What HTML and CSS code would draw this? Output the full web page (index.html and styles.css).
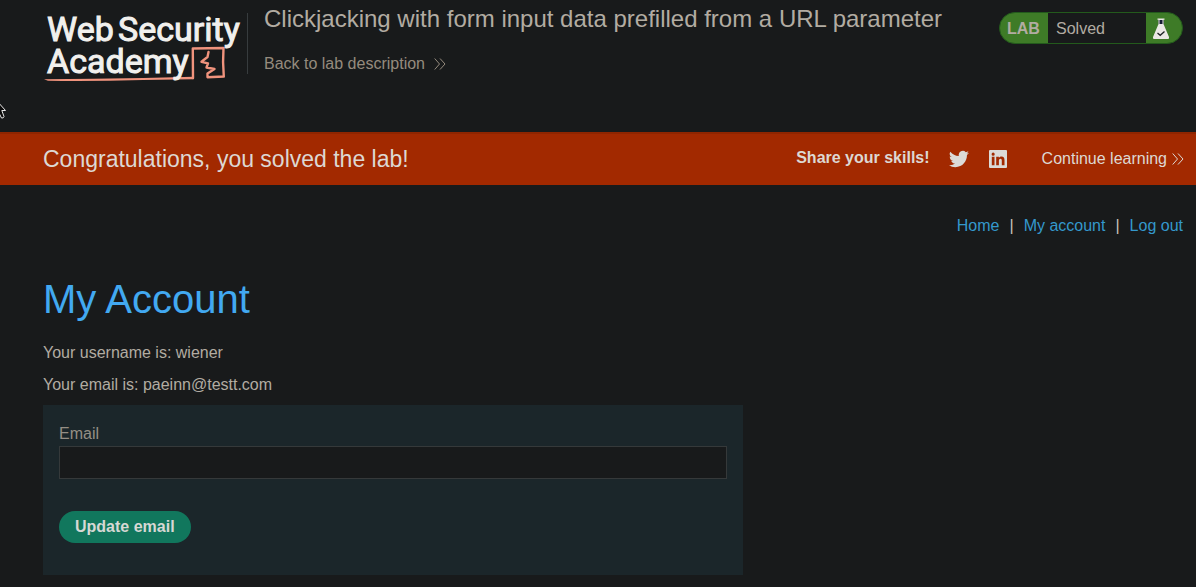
FILE: index.html
```html
<!DOCTYPE html>
<html lang="en">
<head>
<meta charset="utf-8">
<meta name="viewport" content="width=device-width, initial-scale=1">
<title>Clickjacking with form input data prefilled from a URL parameter</title>
<link rel="stylesheet" href="styles.css">
</head>
<body>
<header class="lab-header">
  <a class="logo" href="#" aria-label="Web Security Academy">
    <svg class="logo-art" width="200" height="76" viewBox="0 0 200 76">
      <path fill="none" stroke="#f0937d" stroke-width="2.400" stroke-linejoin="round" stroke-linecap="round" d="M150 68L149.800 38.500L180.500 38Q179.500 52 180.800 66.500L164.500 67.300L164.500 63.500L171.500 59L163.500 57.500L165 53.300L158.500 51.800L164.500 47L165.500 42"/>
      <path fill="#f0937d" d="M1 69.300Q50 69 100 68L150.500 66.800V69.200L100 70Q50 71.500 5 70.800Z"/>
      <g class="logo-text">
        <text x="4" y="31">Web</text>
        <text x="75" y="31">Security</text>
        <text x="4" y="63">Academy</text>
      </g>
    </svg>
  </a>
  <div class="title-block">
    <h2 class="lab-title">Clickjacking with form input data prefilled from a URL parameter</h2>
    <a class="back-link" href="#">Back to lab description
      <svg width="12" height="12" viewBox="0 0 12 12" fill="none" stroke="currentColor"><path d="M.7.500 5.500 6 .7 11.500M6 .500 11 6 6 11.500"/></svg>
    </a>
  </div>
  <div class="lab-status">
    <span class="status-tag">LAB</span>
    <span class="status-text">Solved</span>
    <span class="status-icon">
      <svg width="18" height="22" viewBox="0 0 18 22">
        <path fill="#151b32" d="M6.500 1.500h5V7h-5z"/>
        <path fill="#ebe9e5" d="M5.500.5h7v1.200h-1V6h-1V2H7.500v4h-1V1.700h-1zM6.500 6h5l5.500 13q.5 2-1 2H2q-1.500 0-1-2z"/>
        <path fill="none" stroke="#202426" stroke-width="1.300" d="m5.500 15 2.700 2.300 4.300-3.800"/>
      </svg>
    </span>
  </div>
</header>
<section class="banner">
  <h4 class="banner-message">Congratulations, you solved the lab!</h4>
  <div class="share">
    <span class="share-label">Share your skills!</span>
    <a class="share-link" href="#" aria-label="Share on Twitter">
      <svg width="20" height="20" viewBox="0 0 24 24" fill="currentColor"><path d="M23.950 4.570a10 10 0 0 1-2.820.770 4.960 4.960 0 0 0 2.160-2.720c-.95.550-2 .95-3.130 1.180a4.920 4.920 0 0 0-8.380 4.480C7.690 8.100 4.070 6.130 1.640 3.160a4.920 4.920 0 0 0 1.520 6.570 4.900 4.900 0 0 1-2.230-.61v.06a4.920 4.920 0 0 0 3.950 4.830 5 5 0 0 1-2.210.08 4.940 4.940 0 0 0 4.600 3.420A9.870 9.870 0 0 1 0 19.540a14 14 0 0 0 7.550 2.210c9.050 0 14-7.500 14-13.980l-.02-.64a9.900 9.900 0 0 0 2.420-2.560z"/></svg>
    </a>
    <a class="share-link" href="#" aria-label="Share on LinkedIn">
      <svg width="20" height="20" viewBox="0 0 20 20" fill="currentColor"><path fill-rule="evenodd" d="M2 1h16q1 0 1 1v16q0 1-1 1H2q-1 0-1-1V2q0-1 1-1zm1.800 6.800v8.400h2.700V7.800zM5.150 3.600a1.550 1.550 0 1 0 0 3.100 1.550 1.550 0 0 0 0-3.100zM8.200 7.800v8.400h2.700V12c0-1.200.4-2.200 1.600-2.200s1.300 1 1.300 2.200v4.200h2.700v-4.700c0-2.300-.7-3.900-3.100-3.900-1.200 0-2 .6-2.500 1.400V7.800z"/></svg>
    </a>
  </div>
  <a class="continue-link" href="#">Continue learning
    <svg width="12" height="12" viewBox="0 0 12 12" fill="none" stroke="currentColor"><path d="M.7.500 5.500 6 .7 11.500M6 .500 11 6 6 11.500"/></svg>
  </a>
</section>
<main class="content">
  <nav class="top-links">
    <a href="#">Home</a><span>|</span><a href="#">My account</a><span>|</span><a href="#">Log out</a>
  </nav>
  <h1 class="page-title">My Account</h1>
  <p class="detail">Your username is: wiener</p>
  <p class="detail">Your email is: paeinn@testt.com</p>
  <form class="email-form">
    <label class="email-label" for="email">Email</label>
    <input class="email-input" id="email" type="email" name="email">
    <button class="submit" type="submit">Update email</button>
  </form>
</main>
<svg class="pointer" width="10" height="20" viewBox="0 0 10 20"><path fill="#0a0a0a" stroke="#e8e8e8" d="M-3 0 5.500 9.500H1.800L4 15.500Q3.500 17.500 1.500 17L-1 12"/></svg>
</body>
</html>
```
FILE: styles.css
```css
* {
  box-sizing: border-box;
}

body {
  margin: 0;
  background: #181a1b;
  color: #b2aca2;
  font: 16px/20px "Liberation Sans", Arial, sans-serif;
}

h1, h2, h4, p {
  margin: 0;
  font-weight: 400;
}

a {
  color: inherit;
  text-decoration: none;
}

svg {
  display: block;
  flex: none;
}

.lab-header {
  display: flex;
  align-items: flex-start;
  min-height: 132px;
  padding: 0 13px 0 43px;
}

.logo {
  display: flex;
  align-items: flex-start;
  height: 61px;
  margin-top: 13px;
  padding-right: 4px;
  border-right: 1px solid #373c3e;
}

.logo-art {
  overflow: visible;
  margin-top: -3px;
}

.logo-text {
  fill: #f1f0ed;
  stroke: #f1f0ed;
  stroke-width: 1px;
  font: 400 34px/32px Roboto, sans-serif;
}

.title-block {
  flex: 1;
  padding: 5px 16px 0;
}

.lab-title {
  font-size: 24px;
  line-height: 28px;
}

.back-link {
  display: inline-flex;
  align-items: center;
  gap: 9px;
  margin-top: 21px;
  color: #958b7e;
}

.lab-status {
  display: flex;
  flex: none;
  align-items: stretch;
  width: 184px;
  height: 32px;
  margin-top: 12px;
  overflow: hidden;
  border: 1px solid #235a1c;
  border-radius: 16px;
  background: #3e7b27;
  line-height: 32px;
}

.status-tag {
  width: 48px;
  padding-left: 7px;
  font-weight: 700;
}

.status-text {
  flex: 1;
  padding-left: 8px;
  background: #181a1b;
}

.status-icon {
  display: flex;
  justify-content: center;
  width: 36px;
  padding: 5px 6px 0 0;
}

.banner {
  display: flex;
  align-items: center;
  min-height: 53px;
  padding: 0 12px 2px 43px;
  border-top: 2px solid #8f2500;
  background: #a22900;
  color: #ddd8d3;
}

.banner-message {
  flex: 1;
  font-size: 23px;
  line-height: 28px;
}

.share {
  display: flex;
  align-items: center;
  gap: 19px;
}

.share-label {
  padding-bottom: 2px;
  font-weight: 700;
}

.share-link {
  color: #dcdad7;
}

.continue-link {
  display: flex;
  align-items: center;
  gap: 5px;
  margin-left: 34px;
}

.content {
  padding: 31px 13px 12px 43px;
}

.top-links {
  display: flex;
  justify-content: flex-end;
  gap: 10px;
  color: #c8c3bc;
}

.top-links a {
  color: #3498cc;
}

.page-title {
  margin: 38px 0 18px;
  color: #42a9f1;
  font-size: 40px;
  line-height: 50px;
}

.detail {
  margin-top: 10px;
  line-height: 22px;
}

.email-form {
  display: flex;
  flex-direction: column;
  align-items: flex-start;
  width: 100%;
  max-width: 700px;
  margin-top: 9px;
  padding: 18px 16px 32px;
  background: #1b262a;
}

.email-label {
  line-height: 22px;
  color: #958f85;
}

.email-input {
  width: 100%;
  height: 33px;
  margin: 1px 0 32px;
  padding: 4px 8px;
  border: 1px solid #35393a;
  background: #181a1b;
  color: #b2aca2;
  font: inherit;
}

.submit {
  height: 32px;
  padding: 0 16px;
  border: 0;
  border-radius: 16px;
  background: #11775d;
  color: #d6d8d4;
  font: inherit;
  font-weight: 700;
}

.pointer {
  position: absolute;
  top: 101px;
  left: 0;
  pointer-events: none;
}
```
